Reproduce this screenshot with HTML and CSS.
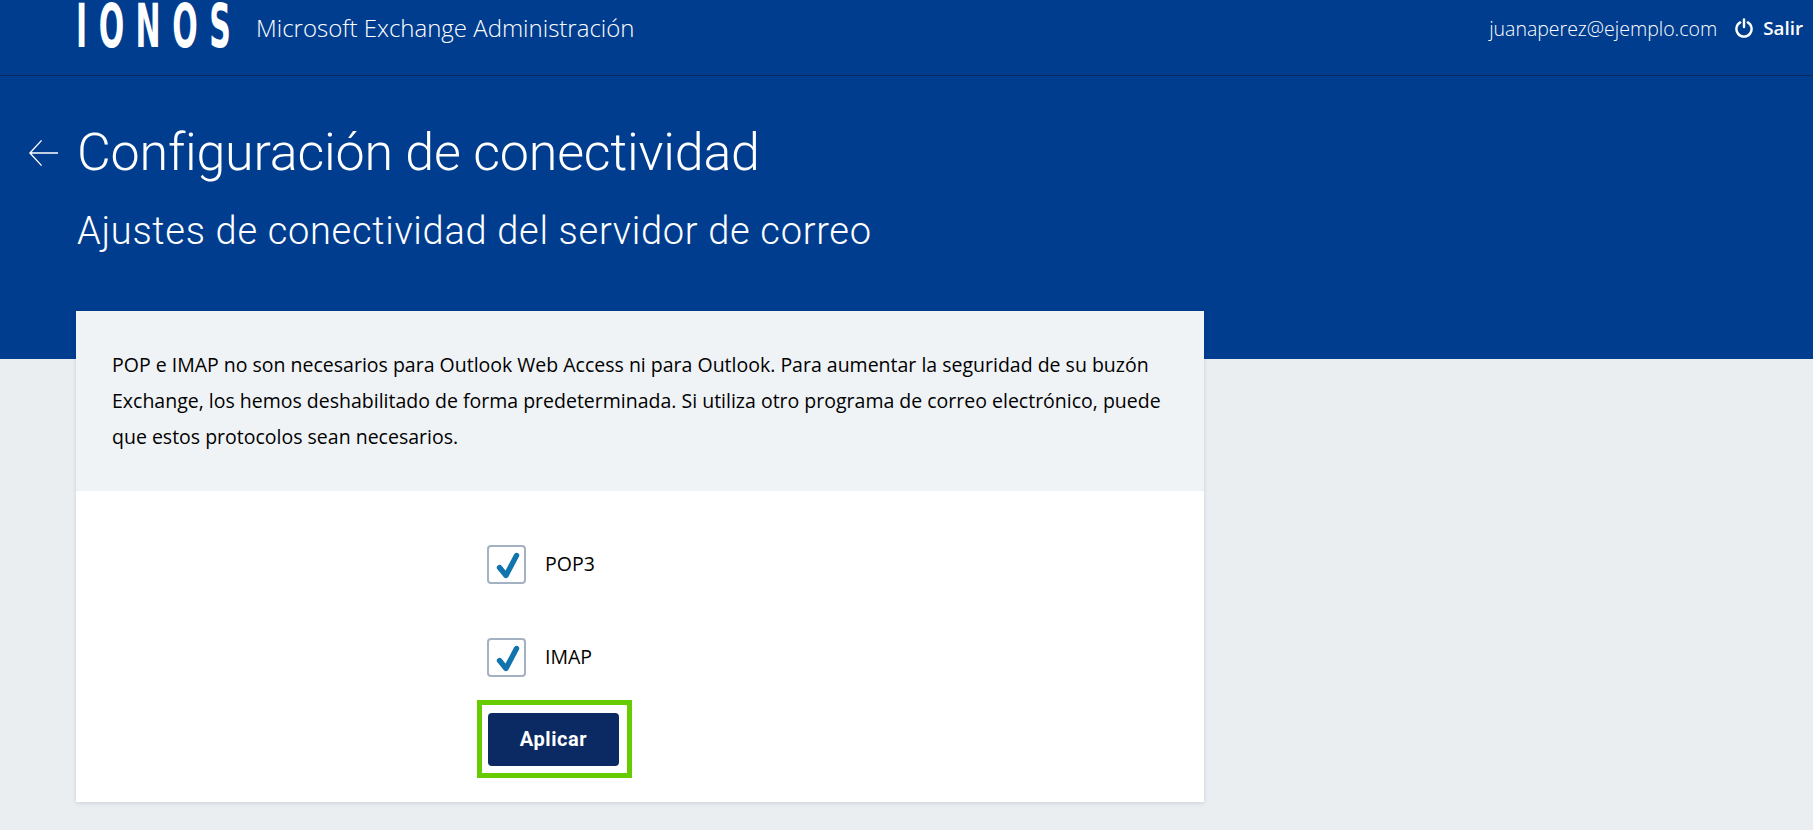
FILE: index.html
```html
<!DOCTYPE html>
<html lang="es">
<head>
<meta charset="utf-8">
<title>Configuración de conectividad</title>
<link rel="stylesheet" href="styles.css">
</head>
<body>
<section class="hero">
  <header class="topbar">
    <div class="brand">
      <span class="logo-box"><span class="logo">IONOS</span></span>
      <span class="product">Microsoft Exchange Administración</span>
    </div>
    <div class="account">
      <span class="email">juanaperez@ejemplo.com</span>
      <a class="logout">
        <svg class="power" viewBox="0 0 18 20" aria-hidden="true"><path d="M5.2 4.4A7.6 7.6 0 1 0 12.8 4.4" fill="none" stroke="#fff" stroke-width="2.4" stroke-linecap="round"/><path d="M9 1.4V9" fill="none" stroke="#fff" stroke-width="2.4" stroke-linecap="round"/></svg>
        <span>Salir</span>
      </a>
    </div>
  </header>
  <div class="headings">
    <div class="title-row">
      <svg class="back" viewBox="0 0 32 28" aria-hidden="true"><path d="M31 14H2M14 1L2 14l12 13" fill="none" stroke="#fff" stroke-width="1.4"/></svg>
      <h1>Configuración de conectividad</h1>
    </div>
    <h2>Ajustes de conectividad del servidor de correo</h2>
  </div>
</section>
<main class="card">
  <p class="intro">POP e IMAP no son necesarios para Outlook Web Access ni para Outlook. Para aumentar la seguridad de su buzón Exchange, los hemos deshabilitado de forma predeterminada. Si utiliza otro programa de correo electrónico, puede que estos protocolos sean necesarios.</p>
  <form class="options">
    <label class="option">
      <span class="box"><svg viewBox="0 0 35 35" aria-hidden="true"><path d="M10.5 20.5l6.5 8L27.5 8.5" fill="none" stroke="#1274ad" stroke-width="5.4" stroke-linecap="round" stroke-linejoin="round"/></svg></span>
      <span class="option-text">POP3</span>
    </label>
    <label class="option">
      <span class="box"><svg viewBox="0 0 35 35" aria-hidden="true"><path d="M10.5 20.5l6.5 8L27.5 8.5" fill="none" stroke="#1274ad" stroke-width="5.4" stroke-linecap="round" stroke-linejoin="round"/></svg></span>
      <span class="option-text">IMAP</span>
    </label>
    <div class="highlight"><button type="button" class="apply">Aplicar</button></div>
  </form>
</main>
</body>
</html>
```

FILE: styles.css
```css
* { box-sizing: border-box; }
html, body { margin: 0; height: 100%; overflow: hidden; }
body { background: #ebeef1; font-family: "Open Sans", sans-serif; color: #001b41; }
.hero { height: 359px; background: #003d8f; color: #fff; }
.topbar { height: 76px; border-bottom: 1px solid #0b2a63; display: flex; justify-content: space-between; align-items: flex-start; padding: 0 10px 0 76px; }
.brand { display: flex; align-items: flex-start; }
.logo-box { width: 180px; height: 48px; display: block; }
.logo { display: inline-block; font: 700 40px/30px "DejaVu Sans", sans-serif; letter-spacing: 15.3px; white-space: nowrap; transform-origin: 0 0; transform: translateY(3.4px) scale(.75, 1.5); }
.product { font-weight: 300; font-size: 24px; line-height: 28px; margin-top: 14px; }
.account { display: flex; align-items: center; margin-top: 14px; height: 28px; font-size: 19.5px; }
.email { font-weight: 300; }
.logout { display: flex; align-items: center; gap: 10px; margin-left: 18px; font-weight: 600; font-size: 18.8px; }
.power { width: 18px; height: 20px; }
.headings { padding: 46px 0 0 28px; }
.title-row { display: flex; align-items: center; gap: 18px; }
.back { width: 31px; height: 28px; }
h1 { margin: 0; font: 300 52px/62px Roboto, sans-serif; letter-spacing: -.2px; }
h2 { margin: 24px 0 0 49px; font: 300 38px/46px Roboto, sans-serif; letter-spacing: .7px; }
.card { width: 1128px; height: 491px; margin: -48px 0 0 76px; background: #fff; box-shadow: 0 1px 4px rgba(0, 27, 65, .15); }
.intro { margin: 0; height: 180px; padding: 36px 36px 0; background: #f0f3f6; font-size: 19.5px; line-height: 36px; color: #000; }
.options { display: flex; flex-direction: column; align-items: flex-start; padding: 54px 0 0 401px; }
.option { display: flex; align-items: center; gap: 19px; margin: 0 0 54px 10px; height: 39px; font-size: 19.5px; color: #000; }
.option-text { padding-bottom: 3px; }
.box { width: 39px; height: 39px; border: 2px solid #a3b1c2; border-radius: 4px; background: #fff; display: block; }
.box svg { display: block; width: 35px; height: 35px; }
.highlight { margin-top: -31px; padding: 8px 8px 7px 6px; border: 5px solid #66cc00; }
.apply { display: block; width: 131px; height: 53px; border: 0; border-radius: 4px; background: #0b2a63; color: #fff; font: 700 20px/53px Roboto, sans-serif; letter-spacing: .6px; padding: 0; }
```
